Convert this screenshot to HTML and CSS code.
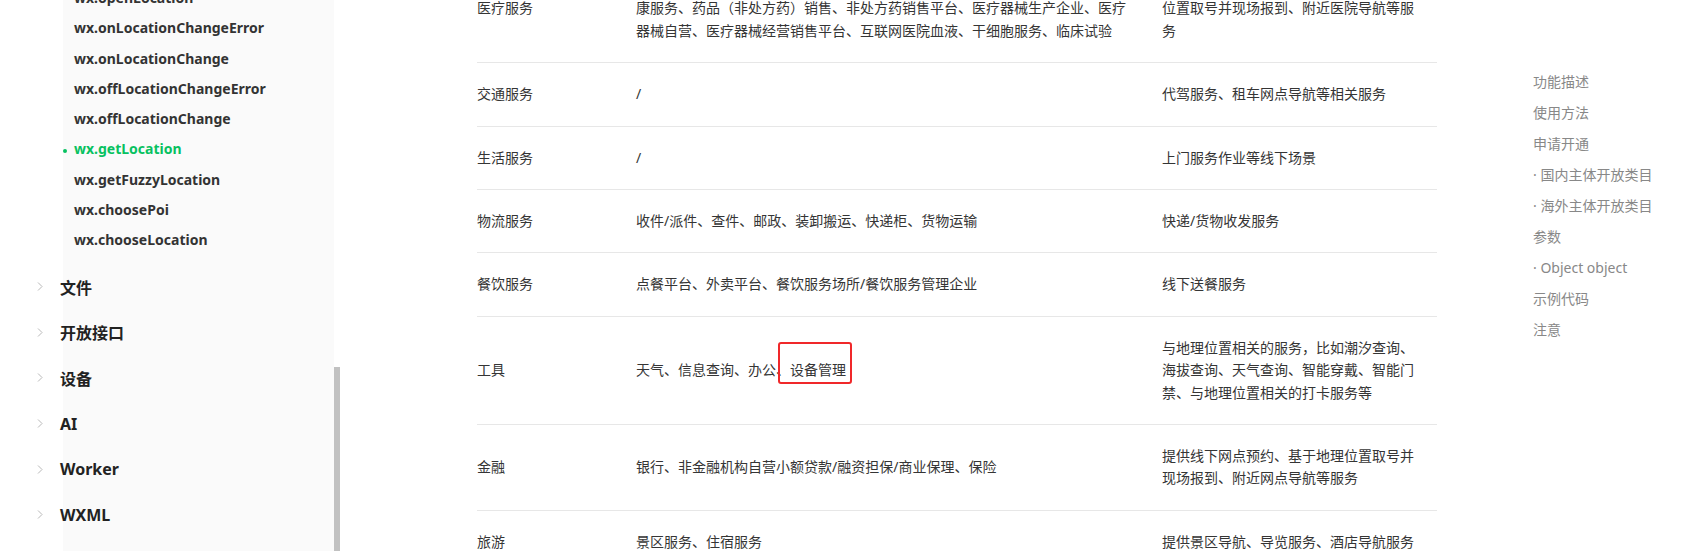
FILE: index.html
```html
<!DOCTYPE html>
<html>
<head>
  <meta charset="UTF-8">
  <meta name="viewport" content="width=device-width, initial-scale=1.0">
  <title>wx.getLocation</title>
  <link rel="stylesheet" href="styles.css">
</head>
<body>

  <div class="layout">

    <!-- 左侧导航 -->
    <div class="sidebar">
      <ul class="sub-list">
        <li>wx.openLocation</li>
        <li>wx.onLocationChangeError</li>
        <li>wx.onLocationChange</li>
        <li>wx.offLocationChangeError</li>
        <li>wx.offLocationChange</li>
        <li class="active">wx.getLocation</li>
        <li>wx.getFuzzyLocation</li>
        <li>wx.choosePoi</li>
        <li>wx.chooseLocation</li>
      </ul>
      <ul class="group-list">
        <li><svg class="arrow" viewBox="0 0 6 9"><polyline points="1,0.5 5,4.5 1,8.5"/></svg>文件</li>
        <li><svg class="arrow" viewBox="0 0 6 9"><polyline points="1,0.5 5,4.5 1,8.5"/></svg>开放接口</li>
        <li><svg class="arrow" viewBox="0 0 6 9"><polyline points="1,0.5 5,4.5 1,8.5"/></svg>设备</li>
        <li><svg class="arrow" viewBox="0 0 6 9"><polyline points="1,0.5 5,4.5 1,8.5"/></svg>AI</li>
        <li><svg class="arrow" viewBox="0 0 6 9"><polyline points="1,0.5 5,4.5 1,8.5"/></svg>Worker</li>
        <li><svg class="arrow" viewBox="0 0 6 9"><polyline points="1,0.5 5,4.5 1,8.5"/></svg>WXML</li>
      </ul>
    </div>
    <div class="scroll-track"><div class="scroll-thumb"></div></div>

    <!-- 正文表格 -->
    <div class="content">
      <table class="category-table">
        <colgroup>
          <col class="col-name">
          <col class="col-sub">
          <col class="col-desc">
        </colgroup>
        <tr>
          <td>医疗服务</td>
          <td>公立医疗机构、私立医疗机构、医疗信息服务、互联网医院、挂号、体检所、健康服务、药品（非处方药）销售、非处方药销售平台、医疗器械生产企业、医疗器械自营、医疗器械经营销售平台、互联网医院血液、干细胞服务、临床试验</td>
          <td>提供线上预约挂号、在线问诊、基于地理位置取号并现场报到、附近医院导航等服务</td>
        </tr>
        <tr>
          <td>交通服务</td>
          <td>/</td>
          <td>代驾服务、租车网点导航等相关服务</td>
        </tr>
        <tr>
          <td>生活服务</td>
          <td>/</td>
          <td>上门服务作业等线下场景</td>
        </tr>
        <tr>
          <td>物流服务</td>
          <td>收件/派件、查件、邮政、装卸搬运、快递柜、货物运输</td>
          <td>快递/货物收发服务</td>
        </tr>
        <tr>
          <td>餐饮服务</td>
          <td>点餐平台、外卖平台、餐饮服务场所/餐饮服务管理企业</td>
          <td>线下送餐服务</td>
        </tr>
        <tr>
          <td>工具</td>
          <td>天气、信息查询、办公、<span class="mark">设备管理</span></td>
          <td>与地理位置相关的服务，比如潮汐查询、海拔查询、天气查询、智能穿戴、智能门禁、与地理位置相关的打卡服务等</td>
        </tr>
        <tr>
          <td>金融</td>
          <td>银行、非金融机构自营小额贷款/融资担保/商业保理、保险</td>
          <td>提供线下网点预约、基于地理位置取号并现场报到、附近网点导航等服务</td>
        </tr>
        <tr>
          <td>旅游</td>
          <td>景区服务、住宿服务</td>
          <td>提供景区导航、导览服务、酒店导航服务</td>
        </tr>
      </table>
    </div>

    <!-- 右侧目录 -->
    <ul class="toc">
      <li>功能描述</li>
      <li>使用方法</li>
      <li>申请开通</li>
      <li class="toc-sub">· 国内主体开放类目</li>
      <li class="toc-sub">· 海外主体开放类目</li>
      <li>参数</li>
      <li class="toc-sub">· Object object</li>
      <li>示例代码</li>
      <li>注意</li>
    </ul>

  </div>

</body>
</html>
```

FILE: styles.css
```css
body {
  margin: 0;
  font-family: "Noto Sans", "Noto Sans CJK SC", sans-serif;
  color: #353535;
  background: #fff;
  overflow: hidden;
}
ul {
  list-style: none;
  margin: 0;
  padding: 0;
}
.layout {
  display: flex;
  align-items: flex-start;
  height: 551px;
}

/* 左侧导航 */
.sidebar {
  width: 334px;
  height: 551px;
  flex: none;
  background: linear-gradient(to right, #fff 63px, #fafafa 63px);
}
.sub-list {
  margin-top: -17px;
  padding-bottom: 8px;
}
.sub-list li {
  padding-left: 74px;
  line-height: 30.3px;
  font-size: 14px;
  font-weight: bold;
  color: #333;
  white-space: nowrap;
}
.sub-list li.active {
  color: #07c160;
}
.sub-list li.active::before {
  content: "";
  display: inline-block;
  width: 4px;
  height: 4px;
  border-radius: 50%;
  background: #07c160;
  margin-left: -11px;
  margin-right: 7px;
  vertical-align: middle;
}
.group-list li {
  display: flex;
  align-items: center;
  height: 45.7px;
  padding-left: 37px;
  font-size: 16px;
  font-weight: bold;
  color: #222;
}
.arrow {
  width: 6px;
  height: 9px;
  margin-right: 17px;
  fill: none;
  stroke: #b8b8b8;
  stroke-width: 1;
}
.scroll-track {
  width: 6px;
  height: 551px;
  flex: none;
  padding-top: 367px;
  box-sizing: border-box;
}
.scroll-thumb {
  height: 100%;
  background: #c1c1c1;
}

/* 正文表格 */
.content {
  flex: none;
  padding-left: 137px;
  width: 960px;
  margin-top: -45px;
}
.category-table {
  width: 960px;
  table-layout: fixed;
  border-collapse: collapse;
  font-size: 14px;
  line-height: 22.4px;
  color: #353535;
}
.col-name {
  width: 159px;
}
.col-sub {
  width: 526px;
}
.col-desc {
  width: 275px;
}
.category-table td {
  padding: 20px 24px 20px 0;
  border-bottom: 1px solid #e7e7e7;
  vertical-align: middle;
}
.category-table td:last-child {
  padding-right: 15px;
}
.mark {
  position: relative;
}
.mark::after {
  content: "";
  position: absolute;
  left: -12px;
  right: -6px;
  top: -18px;
  bottom: -5px;
  border: 2px solid #f0282a;
  border-radius: 3px;
}

/* 右侧目录 */
.toc {
  flex: none;
  margin-left: 96px;
  padding-top: 66px;
  font-size: 14px;
  color: #888;
}
.toc li {
  line-height: 31px;
  white-space: nowrap;
}
```
